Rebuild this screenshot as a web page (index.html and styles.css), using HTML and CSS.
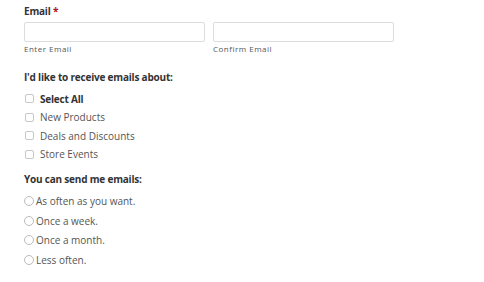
FILE: index.html
```
<!DOCTYPE html>
<html>
<head>
<meta charset="utf-8">
<link rel="stylesheet" href="styles.css">
</head>
<body>
<form class="form">
  <div class="field">
    <div class="label">Email <span class="req">*</span></div>
    <div class="email-row">
      <div class="email-col">
        <input class="text-input" type="email">
        <div class="sub">Enter Email</div>
      </div>
      <div class="email-col">
        <input class="text-input" type="email">
        <div class="sub">Confirm Email</div>
      </div>
    </div>
  </div>
  <div class="group">
    <div class="label">I'd like to receive emails about:</div>
    <div class="checks">
      <label class="check bold"><input type="checkbox" class="box"><span>Select All</span></label>
      <label class="check"><input type="checkbox" class="box"><span>New Products</span></label>
      <label class="check"><input type="checkbox" class="box"><span>Deals and Discounts</span></label>
      <label class="check"><input type="checkbox" class="box"><span>Store Events</span></label>
    </div>
  </div>
  <div class="group">
    <div class="label">You can send me emails:</div>
    <div class="radios">
      <label class="radio"><input type="radio" name="f" class="circ"><span>As often as you want.</span></label>
      <label class="radio"><input type="radio" name="f" class="circ"><span>Once a week.</span></label>
      <label class="radio"><input type="radio" name="f" class="circ"><span>Once a month.</span></label>
      <label class="radio"><input type="radio" name="f" class="circ"><span>Less often.</span></label>
    </div>
  </div>
</form>
</body>
</html>
```
FILE: styles.css
```
html, body { margin: 0; padding: 0; background: #fff; }
body { font-family: "Open Sans", sans-serif; color: #555; }
.form { padding: 5px 0 0 24px; display: flex; flex-direction: column; }
.label { font-size: 10px; font-weight: bold; color: #333; line-height: 12px; letter-spacing: -0.2px; }
.req { color: #b0131b; }
.email-row { display: flex; gap: 8px; margin-top: 5px; }
.email-col { display: flex; flex-direction: column; }
.text-input { width: 181px; height: 20px; box-sizing: border-box; border: 1px solid #ddd; border-radius: 2px; margin: 0; padding: 0; }
.sub { font-size: 8px; letter-spacing: 0.5px; color: #555; margin-top: 2px; line-height: 10px; }
.group { margin-top: 17px; }
.group + .group { margin-top: 9px; }
.checks { display: flex; flex-direction: column; margin-top: 6.5px; }
.check { display: flex; align-items: center; height: 18.5px; font-size: 10px; color: #555; }
.check.bold { font-weight: bold; color: #333; letter-spacing: -0.2px; }
.box { appearance: none; width: 9px; height: 9px; border: 1px solid #c8c8c8; border-radius: 2px; margin: 0 6px 0 1px; box-sizing: border-box; }
.radios { display: flex; flex-direction: column; margin-top: 6.5px; }
.radio { display: flex; align-items: center; height: 19.7px; font-size: 10px; color: #555; }
.circ { appearance: none; width: 10px; height: 10px; border: 1px solid #bbb; border-radius: 50%; margin: 0 2px 0 0; box-sizing: border-box; }
```
